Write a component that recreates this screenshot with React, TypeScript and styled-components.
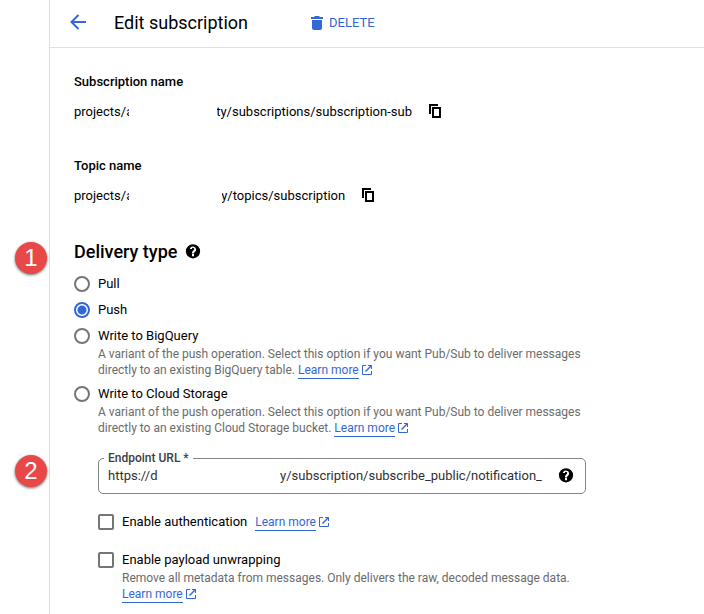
import React, { useState } from "react";
import styled, { createGlobalStyle } from "styled-components";

const blue = "#3367d6";

const GlobalStyle = createGlobalStyle`
  *, *::before, *::after { box-sizing: border-box; }
  body {
    margin: 0;
    background: #fff;
    color: #000;
    font: 400 13px/20px Roboto, sans-serif;
  }
`;

const Page = styled.div`
  display: grid;
  grid-template-columns: 49px minmax(0, 1fr);
  min-height: 100vh;
`;

const Content = styled.div`
  grid-column: 2;
  border-left: 1px solid #e0e0e0;
`;

const Header = styled.header`
  display: flex;
  align-items: center;
  height: 48px;
  padding: 0 18px 2px;
  border-bottom: 1px solid #e0e0e0;
`;

const IconButton = styled.button`
  display: inline-flex;
  flex: none;
  padding: 0;
  border: 0;
  background: none;
  color: inherit;
  cursor: pointer;
`;

const BackButton = styled(IconButton)`
  color: ${blue};
`;

const Title = styled.h1`
  margin: 0 62px 0 26px;
  font-size: 18px;
  font-weight: 400;
  line-height: 24px;
`;

const DeleteButton = styled(IconButton)`
  align-items: center;
  gap: 5px;
  color: ${blue};
  font: 400 13px/20px Roboto, sans-serif;
`;

const Main = styled.main`
  padding: 24px 24px 11px;
`;

const Property = styled.section`
  margin-bottom: 34px;
`;

const PropertyName = styled.h2`
  margin: 0 0 10px;
  font-size: 13px;
  font-weight: 500;
  line-height: 20px;
`;

const PropertyValue = styled.div`
  display: flex;
  align-items: center;
  height: 20px;
`;

const Redaction = styled.span<{ $width: number }>`
  flex: none;
  align-self: stretch;
  width: ${(p) => p.$width}px;
  margin: 0 -1px 0 -4px;
  background: #fff;
  position: relative;
`;

const CopyButton = styled(IconButton)`
  margin-left: 15px;
`;

const Section = styled.section`
  position: relative;
`;

const SectionTitle = styled.h2`
  display: flex;
  align-items: center;
  gap: 7px;
  margin: 0 0 10px;
  font-size: 18px;
  font-weight: 500;
  line-height: 24px;
`;

const Marker = styled.span<{ $top: number }>`
  position: absolute;
  left: -59px;
  top: ${(p) => p.$top}px;
  width: 32px;
  height: 32px;
  border-radius: 50%;
  background: #e84848;
  box-shadow: 0 1px 3px rgba(0, 0, 0, 0.6);
  color: #fff;
  font: 400 24px/32px "Liberation Sans", sans-serif;
  text-align: center;
`;

const Choices = styled.div`
  display: grid;
  gap: 6px;
`;

const Choice = styled.div`
  display: grid;
  grid-template-columns: 16px minmax(0, 1fr);
  column-gap: 8px;
  align-items: center;
`;

const Radio = styled.input`
  appearance: none;
  width: 16px;
  height: 16px;
  margin: 0;
  border: 2px solid #757575;
  border-radius: 50%;
  &:checked {
    border-color: ${blue};
    background: radial-gradient(circle, ${blue} 0 4px, #fff 5px);
  }
`;

const Checkbox = styled.input`
  appearance: none;
  width: 16px;
  height: 16px;
  margin: 0;
  border: 2px solid #757575;
  border-radius: 2px;
  &:checked {
    border-color: ${blue};
    background: ${blue};
  }
`;

const Hint = styled.p`
  grid-column: 2;
  max-width: 500px;
  margin: 0;
  color: #6b6b6b;
  font-size: 12px;
  line-height: 16px;
`;

const LinkAnchor = styled.a`
  display: inline-flex;
  align-items: center;
  gap: 2px;
  height: 16px;
  color: ${blue};
  font-size: 12px;
  line-height: 16px;
  text-decoration: none;
  vertical-align: top;
`;

const LinkText = styled.span`
  height: 16px;
  box-shadow: 0 1px 0 ${blue};
`;

const PushOptions = styled.div`
  display: grid;
  gap: 18px;
  margin: 22px 0 0 24px;
`;

const Field = styled.div`
  position: relative;
  display: flex;
  align-items: center;
  max-width: 488px;
  height: 36px;
  padding: 0 10px 0 9px;
  border: 1px solid #80868b;
  border-radius: 5px;
`;

const FieldLabel = styled.label`
  position: absolute;
  left: 5px;
  top: -9px;
  padding: 0 4px;
  background: #fff;
  color: #3c4043;
  font-size: 12px;
  font-weight: 500;
  line-height: 16px;
`;

const FieldInput = styled.input`
  flex: 1;
  min-width: 0;
  margin-right: 14px;
  padding: 0;
  border: 0;
  outline: 0;
  background: none;
  color: #303030;
  font: 400 13px/20px Roboto, sans-serif;
`;

const LabelLine = styled.div`
  display: flex;
  align-items: center;
  gap: 8px;
`;

const CopyIcon = () => (
  <svg width="16" height="16" viewBox="0 0 16 16" fill="none" stroke="currentColor" strokeWidth="2" aria-hidden="true">
    <path d="M3 10V1h8M6 4h7v9H6z" />
  </svg>
);

const HelpIcon = () => (
  <svg width="18" height="18" viewBox="0 1 24 24" fill="currentColor" aria-hidden="true">
    <path d="M12 2.500a9.500 9.500 0 1 0 0 19 9.500 9.500 0 0 0 0-19zm1.400 16h-2.800v-2.800h2.800zm2.500-7.200-1 1c-.9.9-1.500 1.500-1.500 2.600h-2.800v-.6c0-1.200.6-2.200 1.400-3l1.200-1.200a1.500 1.500 0 1 0-2.600-1.200H7.800a4.200 4.200 0 1 1 8.100 2.400z" />
  </svg>
);

const BackIcon = () => (
  <svg width="20" height="20" viewBox="0 0 20 20" fill="none" stroke="currentColor" strokeWidth="2" aria-hidden="true">
    <path d="M18 9H4M10.500 2 3.500 9l7 7" />
  </svg>
);

const DeleteIcon = () => (
  <svg width="14" height="16" viewBox="0 0 14 16" fill="currentColor" aria-hidden="true">
    <path d="M1 2h3l1-1h4l1 1h3v2H1zM2 5h10v8a2 2 0 0 1-2 2H4a2 2 0 0 1-2-2z" />
  </svg>
);

const ExternalIcon = () => (
  <svg width="12" height="12" viewBox="0 0 12 12" fill="none" stroke="currentColor" aria-hidden="true">
    <path d="M5 1.500H1.500v9h9V7M7 1.500h3.500V5" />
    <path d="m10.500 1.500-6 6" strokeWidth="1.400" />
  </svg>
);

const LearnMore = () => (
  <LinkAnchor href="#">
    <LinkText>Learn more</LinkText>
    <ExternalIcon />
  </LinkAnchor>
);

const deliveryTypes = [
  { id: "pull", label: "Pull" },
  { id: "push", label: "Push" },
  {
    id: "bigquery",
    label: "Write to BigQuery",
    hint: "A variant of the push operation. Select this option if you want Pub/Sub to deliver messages directly to an existing BigQuery table.",
  },
  {
    id: "storage",
    label: "Write to Cloud Storage",
    hint: "A variant of the push operation. Select this option if you want Pub/Sub to deliver messages directly to an existing Cloud Storage bucket.",
  },
];

export default function App() {
  const [delivery, setDelivery] = useState("push");
  const [endpoint, setEndpoint] = useState(
    "https://d" + "\u00a0".repeat(38) + "y/subscription/subscribe_public/notification_"
  );

  return (
    <Page>
      <GlobalStyle />
      <Content>
        <Header>
          <BackButton aria-label="Back"><BackIcon /></BackButton>
          <Title>Edit subscription</Title>
          <DeleteButton><DeleteIcon />DELETE</DeleteButton>
        </Header>
        <Main>
          <Property>
            <PropertyName>Subscription name</PropertyName>
            <PropertyValue>
              <span>projects/a</span>
              <Redaction $width={88} />
              <span>ty/subscriptions/subscription-sub</span>
              <CopyButton aria-label="Copy subscription name"><CopyIcon /></CopyButton>
            </PropertyValue>
          </Property>
          <Property>
            <PropertyName>Topic name</PropertyName>
            <PropertyValue>
              <span>projects/a</span>
              <Redaction $width={93} />
              <span>y/topics/subscription</span>
              <CopyButton aria-label="Copy topic name"><CopyIcon /></CopyButton>
            </PropertyValue>
          </Property>
          <Section>
            <Marker $top={2}>1</Marker>
            <SectionTitle id="delivery-title">
              Delivery type
              <IconButton aria-label="Delivery type help"><HelpIcon /></IconButton>
            </SectionTitle>
            <Choices role="radiogroup" aria-labelledby="delivery-title">
              {deliveryTypes.map((type) => (
                <Choice key={type.id}>
                  <Radio
                    type="radio"
                    name="delivery"
                    id={type.id}
                    checked={delivery === type.id}
                    onChange={() => setDelivery(type.id)}
                  />
                  <label htmlFor={type.id}>{type.label}</label>
                  {type.hint && <Hint>{type.hint} <LearnMore /></Hint>}
                </Choice>
              ))}
            </Choices>
          </Section>
          <Section>
            <Marker $top={-3}>2</Marker>
            <PushOptions>
              <Field>
                <FieldLabel htmlFor="endpoint">Endpoint URL *</FieldLabel>
                <FieldInput id="endpoint" value={endpoint} onChange={(e) => setEndpoint(e.target.value)} />
                <IconButton aria-label="Endpoint URL help"><HelpIcon /></IconButton>
              </Field>
              <Choice>
                <Checkbox type="checkbox" id="auth" />
                <LabelLine>
                  <label htmlFor="auth">Enable authentication</label>
                  <LearnMore />
                </LabelLine>
              </Choice>
              <Choice>
                <Checkbox type="checkbox" id="unwrap" />
                <label htmlFor="unwrap">Enable payload unwrapping</label>
                <Hint>
                  Remove all metadata from messages. Only delivers the raw, decoded message data. <LearnMore />
                </Hint>
              </Choice>
            </PushOptions>
          </Section>
        </Main>
      </Content>
    </Page>
  );
}
